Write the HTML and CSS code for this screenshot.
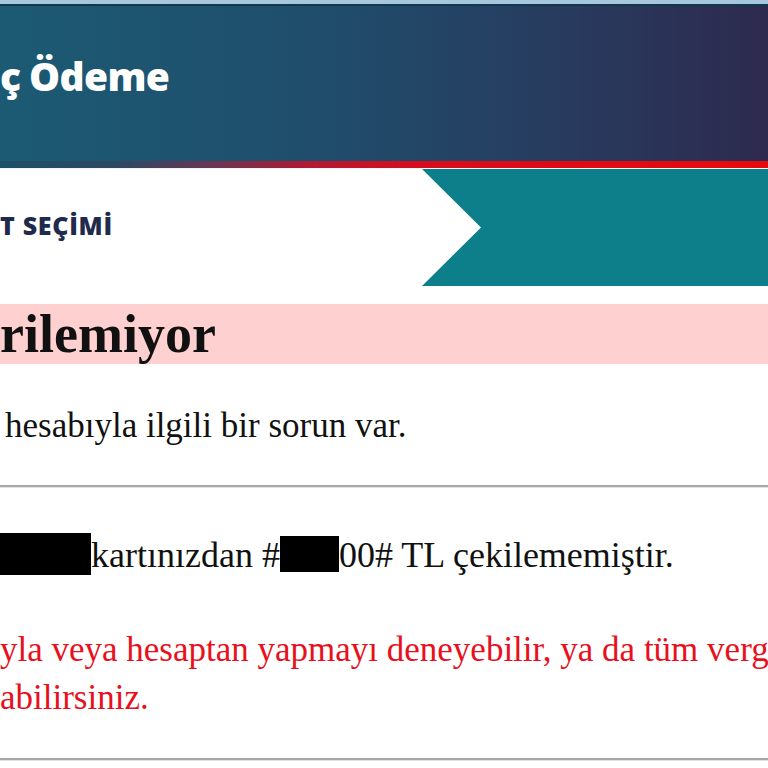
FILE: index.html
```html
<!DOCTYPE html>
<html lang="tr">
<head>
<meta charset="utf-8">
<title>Ödeme</title>
<link rel="stylesheet" href="styles.css">
</head>
<body>
<div class="topbar"></div>
<header class="banner">
  <h1 class="banner-title">ç Ödeme</h1>
</header>
<div class="accent"></div>
<nav class="steps">
  <div class="step step-current"><span class="step-label">T SEÇİMİ</span></div>
  <div class="step step-next"></div>
</nav>
<main class="content">
  <div class="alert"><h2 class="alert-title">rilemiyor</h2></div>
  <p class="lead">hesabıyla ilgili bir sorun var.</p>
  <hr class="rule">
  <p class="detail"><span class="redact redact-card"></span>kartınızdan #<span class="redact redact-amount"></span>00# TL çekilememiştir.</p>
  <p class="warn">yla veya hesaptan yapmayı deneyebilir, ya da tüm vergi<br>abilirsiniz.</p>
  <hr class="rule rule-bottom">
</main>
</body>
</html>
```

FILE: styles.css
```css
html, body {
  margin: 0;
  padding: 0;
  background: #ffffff;
}
body {
  width: 768px;
  height: 768px;
  overflow: hidden;
  font-family: "Liberation Serif", "Times New Roman", serif;
}
.topbar {
  height: 4px;
  background: #a7c7df;
  border-bottom: 2px solid #12394a;
}
.banner {
  height: 155px;
  background: linear-gradient(to right, #1c5a73 0%, #1f4e6c 40%, #283a5e 75%, #2d2a4e 100%);
  box-sizing: border-box;
  padding-top: 44px;
}
.banner-title {
  margin: 0;
  font-family: "Open Sans", "Noto Sans", sans-serif;
  font-weight: 800;
  font-size: 39px;
  line-height: 52px;
  color: #ffffff;
  letter-spacing: -0.6px;
  word-spacing: -1px;
}
.accent {
  height: 7px;
  background: linear-gradient(to right, #1d4f66 0%, #2c4a62 15%, #6a3553 28%, #b01a32 40%, #d80c1c 55%, #e80a0a 100%);
}
.steps {
  display: flex;
  height: 118px;
  border-top: 1px solid #eef3f3;
  box-sizing: border-box;
}
.step-current {
  width: 422px;
  background: #ffffff;
  display: flex;
  align-items: center;
  padding-bottom: 4px;
  box-sizing: border-box;
}
.step-label {
  font-family: "Open Sans", "Noto Sans", sans-serif;
  font-weight: 800;
  font-size: 25px;
  line-height: 33px;
  color: #1f2a4c;
  letter-spacing: 0.7px;
}
.step-next {
  flex: 1;
  background: #0c7f8b;
  clip-path: polygon(0 0, 100% 0, 100% 100%, 0 100%, 59px 50%);
}
.content {
  margin-top: 18px;
}
.alert {
  height: 60px;
  background: #ffd0d0;
}
.alert-title {
  margin: 0;
  font-size: 54px;
  font-weight: 700;
  line-height: 60px;
  color: #111111;
}
.lead {
  margin: 42px 0 0;
  padding-left: 5px;
  font-size: 35px;
  line-height: 40px;
  color: #111111;
}
.rule {
  margin: 39px 0 0;
  height: 0;
  border: 0;
  border-top: 2px solid #a8a8a8;
  box-shadow: 0 1px 0 #e2e2e2;
}
.detail {
  margin: 48px 0 0;
  font-size: 36px;
  line-height: 40px;
  color: #111111;
}
.redact {
  display: inline-block;
  background: #000000;
  vertical-align: top;
}
.redact-card {
  width: 91px;
  height: 42px;
  margin-top: -2px;
}
.redact-amount {
  width: 59px;
  height: 36px;
  margin-top: 1px;
}
.warn {
  margin: 51px 0 0;
  font-size: 35px;
  line-height: 48px;
  color: #e8101c;
  white-space: nowrap;
}
.rule-bottom {
  margin-top: 36px;
}
```
